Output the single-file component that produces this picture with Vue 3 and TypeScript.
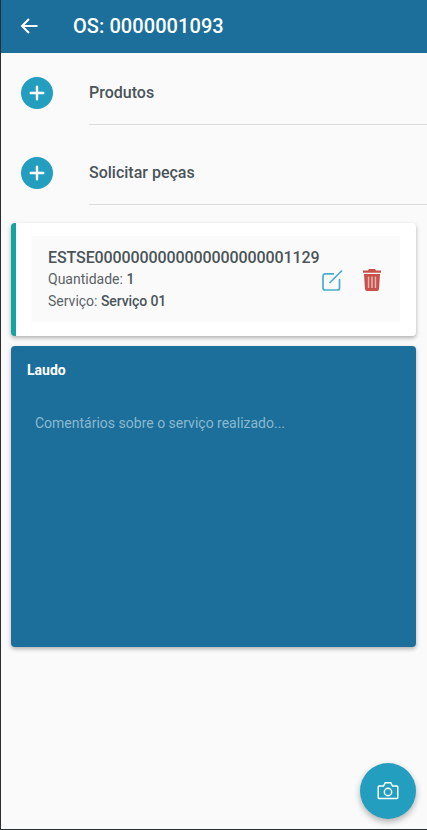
<script setup lang="ts">
const rows: string[] = ['Produtos', 'Solicitar peças']
</script>

<template>
  <div class="page">
    <header class="topbar">
      <svg class="back" width="24" height="24" viewBox="0 0 24 24" fill="none" stroke="#fff" stroke-width="2"><path d="M20.500 12H5M12 5l-7 7 7 7"/></svg>
      <span class="title">OS: 0000001093</span>
    </header>

    <div class="row" v-for="r in rows" :key="r">
      <div class="plus">
        <svg width="22" height="22" viewBox="0 0 22 22" fill="none" stroke="#fff" stroke-width="2.400" stroke-linecap="round"><path d="M11 4.700v12.600M4.700 11h12.600"/></svg>
      </div>
      <div class="row-label">{{ r }}</div>
    </div>

    <section class="item">
      <div class="item-inner">
        <div class="item-text">
          <div class="code">ESTSE0000000000000000000001129</div>
          <div class="line">Quantidade: <b>1</b></div>
          <div class="line">Serviço: <b>Serviço 01</b></div>
        </div>
        <svg class="edit" width="22" height="22" viewBox="0 0 22 22" fill="none" stroke="#4aaccc" stroke-width="1.700">
          <path d="M13 4.900H4a2 2 0 0 0-2 2V19a2 2 0 0 0 2 2h12.500a2 2 0 0 0 2-2V10"/>
          <path d="M8.500 14 21 1.500"/>
        </svg>
        <svg class="trash" width="18" height="22" viewBox="0 0 18 22">
          <path fill="#c8504a" d="M6 0h6l1 1.500h5v2.200H0V1.500h5zM1 5h16l-1 15a2 2 0 0 1-2 2H4a2 2 0 0 1-2-2z"/>
          <path fill="#e8b5b2" d="M4.800 7.500h1.500v11.500H4.800zM8.250 7.500h1.500v11.500h-1.500zM11.700 7.500h1.500v11.500h-1.500z"/>
        </svg>
      </div>
    </section>

    <section class="laudo">
      <div class="laudo-title">Laudo</div>
      <div class="laudo-hint">Comentários sobre o serviço realizado...</div>
    </section>

    <button class="fab" type="button">
      <svg width="24" height="24" viewBox="0 0 24 24" fill="none" stroke="#fff" stroke-width="1.400">
        <path d="M3.200 7h4.300l1.700-3.200h5.600L16.500 7h4.300a1 1 0 0 1 1 1v10.500a1 1 0 0 1-1 1H3.200a1 1 0 0 1-1-1V8a1 1 0 0 1 1-1z"/>
        <circle cx="12" cy="13" r="3.700"/>
      </svg>
    </button>
  </div>
</template>

<style>
html, body { margin: 0; background: #fafafa; }
</style>

<style scoped>
.page {
  position: relative;
  box-sizing: border-box;
  width: 427px;
  height: 830px;
  overflow: hidden;
  background: #fafafa;
  border-left: 1px solid #2b2f33;
  border-bottom: 1px solid #2b2f33;
  font-family: Roboto, "Liberation Sans", sans-serif;
  color: #4a5459;
}
.topbar {
  box-sizing: border-box;
  height: 53px;
  background: #1c6f9a;
  display: flex;
  align-items: center;
  padding: 0 0 2px 16px;
  color: #fff;
}
.back { flex: none; }
.title { margin-left: 32px; font-size: 20px; font-weight: 500; letter-spacing: .07px; }
.row {
  display: flex;
  height: 80px;
  padding-left: 20px;
}
.plus {
  flex: none;
  width: 32px;
  height: 32px;
  margin-top: 24px;
  border-radius: 50%;
  background: #249ebf;
  display: flex;
  align-items: center;
  justify-content: center;
}
.row-label {
  flex: 1;
  margin-left: 36px;
  height: 71px;
  line-height: 79px;
  border-bottom: 1px solid #dcdcdc;
  font-size: 16px;
  font-weight: 500;
}
.item {
  margin: 10px 11px 0 10px;
  height: 113px;
  box-sizing: border-box;
  background: #fff;
  border-left: 5px solid #14a3a0;
  border-radius: 4px;
  padding: 13px 16px 14px 16px;
  box-shadow: 0 2px 4px rgba(0, 0, 0, .3);
}
.item-inner {
  height: 86px;
  background: #fafafa;
  display: flex;
  align-items: center;
  padding: 0 19px 0 16px;
}
.item-text { flex: 1; min-width: 0; }
.code { font-size: 16px; font-weight: 500; line-height: 19px; white-space: nowrap; letter-spacing: -.1px; }
.line { font-size: 14px; line-height: 20px; color: #5a6266; margin-top: 2px; }
.line b { font-weight: 500; color: #4a5459; letter-spacing: -.1px; }
.edit { flex: none; margin-right: 20px; margin-top: 2px; }
.trash { flex: none; margin-top: 2px; }
.laudo {
  margin: 10px 11px 0 10px;
  height: 301px;
  box-sizing: border-box;
  background: #1c6f9a;
  border-radius: 4px;
  padding: 15px 16px;
  box-shadow: 0 2px 4px rgba(0, 0, 0, .3);
}
.laudo-title { color: #fff; font-size: 14px; font-weight: 700; line-height: 18px; }
.laudo-hint { margin-top: 34px; margin-left: 8px; font-size: 14px; line-height: 20px; color: #8ab9d0; }
.fab {
  position: absolute;
  right: 11px;
  bottom: 10px;
  width: 56px;
  height: 56px;
  border: none;
  border-radius: 50%;
  background: #249ebf;
  padding: 0;
  display: flex;
  align-items: center;
  justify-content: center;
  box-shadow: 0 3px 6px rgba(0, 0, 0, .3);
}
</style>
